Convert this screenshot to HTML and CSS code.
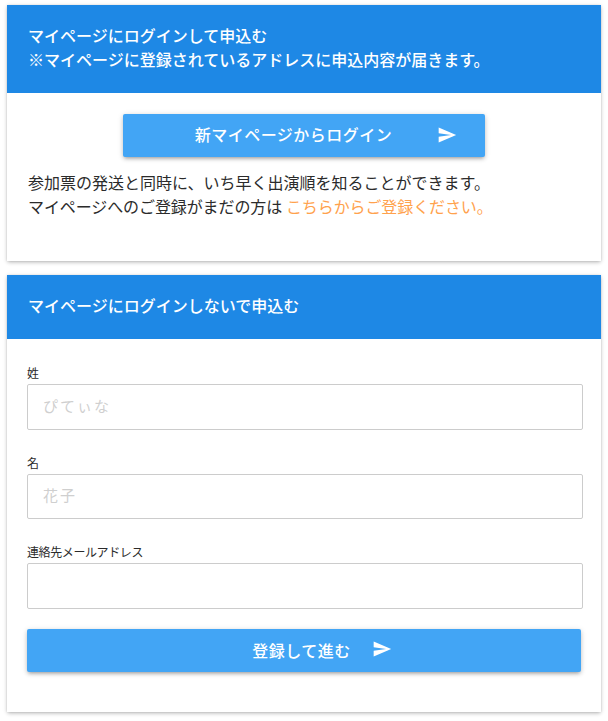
FILE: index.html
```html
<!DOCTYPE html>
<html lang="ja">
<head>
  <meta charset="UTF-8">
  <title>申込</title>
  <link rel="stylesheet" href="styles.css">
</head>
<body>
  <div class="card card-login">
    <div class="card-title">
      マイページにログインして申込む<br>
      ※マイページに登録されているアドレスに申込内容が届きます。
    </div>
    <div class="card-body">
      <a class="btn btn-login" href="#">
        <span class="btn-label">新マイページからログイン</span>
        <svg class="send" viewBox="0 0 24 24"><path d="M2.01 21L23 12 2.01 3 2 10l15 2-15 2z"/></svg>
      </a>
      <p class="note">
        参加票の発送と同時に、いち早く出演順を知ることができます。<br>
        <span class="note-tight">マイページへのご登録がまだの方は <a class="note-link" href="#">こちらからご登録ください。</a></span>
      </p>
    </div>
  </div>

  <div class="card card-guest">
    <div class="card-title">マイページにログインしないで申込む</div>
    <form class="guest-form" onsubmit="return false;">
      <label class="field">
        <span class="field-label">姓</span>
        <input type="text" class="spaced" placeholder="ぴてぃな">
      </label>
      <label class="field">
        <span class="field-label">名</span>
        <input type="text" class="spaced" placeholder="花子">
      </label>
      <label class="field">
        <span class="field-label">連絡先メールアドレス</span>
        <input type="text">
      </label>
      <button type="submit" class="btn btn-submit">
        <span class="btn-label">登録して進む</span>
        <svg class="send" viewBox="0 0 24 24"><path d="M2.01 21L23 12 2.01 3 2 10l15 2-15 2z"/></svg>
      </button>
    </form>
  </div>
</body>
</html>
```

FILE: styles.css
```css
body {
  margin: 0;
  padding: 5px 7px 9px;
  background: #fff;
  color: #2b2b2b;
  font-family: Roboto, "Noto Sans CJK JP", sans-serif;
  font-size: 16px;
  line-height: 24px;
}

.card {
  background: #fff;
  box-shadow: 0 2px 4px -1px rgba(0,0,0,0.2), 0 1px 5px 0 rgba(0,0,0,0.12), 0 0 2px 0 rgba(0,0,0,0.1);
}

.card-login {
  height: 256px;
  margin-bottom: 14px;
}

.card-guest {
  height: 437px;
}

.card-title {
  background: #1e88e5;
  color: #fff;
  font-weight: 500;
  padding: 20px 21px;
}

.card-body {
  padding: 21px 21px 0;
}

.btn {
  display: flex;
  align-items: center;
  justify-content: center;
  height: 43px;
  box-sizing: border-box;
  border: none;
  border-radius: 2px;
  background: #42a5f5;
  color: #fff;
  font-family: inherit;
  font-size: 16px;
  font-weight: 500;
  letter-spacing: 0.5px;
  text-decoration: none;
  box-shadow: 0 3px 3px -2px rgba(0,0,0,0.2), 0 2px 4px 0 rgba(0,0,0,0.14), 0 1px 6px 0 rgba(0,0,0,0.12);
}

.btn-login {
  width: 362px;
  padding-left: 44px;
  margin: 0 auto 15px;
}

.btn-submit {
  width: 554px;
  padding: 0 0 0 36px;
  margin-top: 20px;
}

.send {
  width: 20px;
  height: 20px;
  margin-bottom: 2px;
  fill: #fff;
}

.btn-login .send {
  margin-left: 45px;
}

.btn-submit .send {
  margin-left: 21px;
}

.note {
  margin: 0;
}

.note-tight {
  letter-spacing: -0.1px;
}

.note-link {
  color: #ffa24d;
  text-decoration: none;
}

.guest-form {
  padding: 26px 18px 0 20px;
}

.field {
  display: block;
}

.field + .field {
  margin-top: 25px;
}

.field-label {
  display: block;
  font-size: 12px;
  letter-spacing: -0.4px;
  line-height: 19px;
}

.field input {
  display: block;
  width: 100%;
  height: 45.5px;
  box-sizing: border-box;
  padding: 0 15px;
  border: 1px solid #ccc;
  border-radius: 2px;
  outline: none;
  font-family: inherit;
  font-size: 15px;
}

.field input::placeholder {
  color: #cfcfcf;
}

.spaced {
  letter-spacing: 2px;
}
```
